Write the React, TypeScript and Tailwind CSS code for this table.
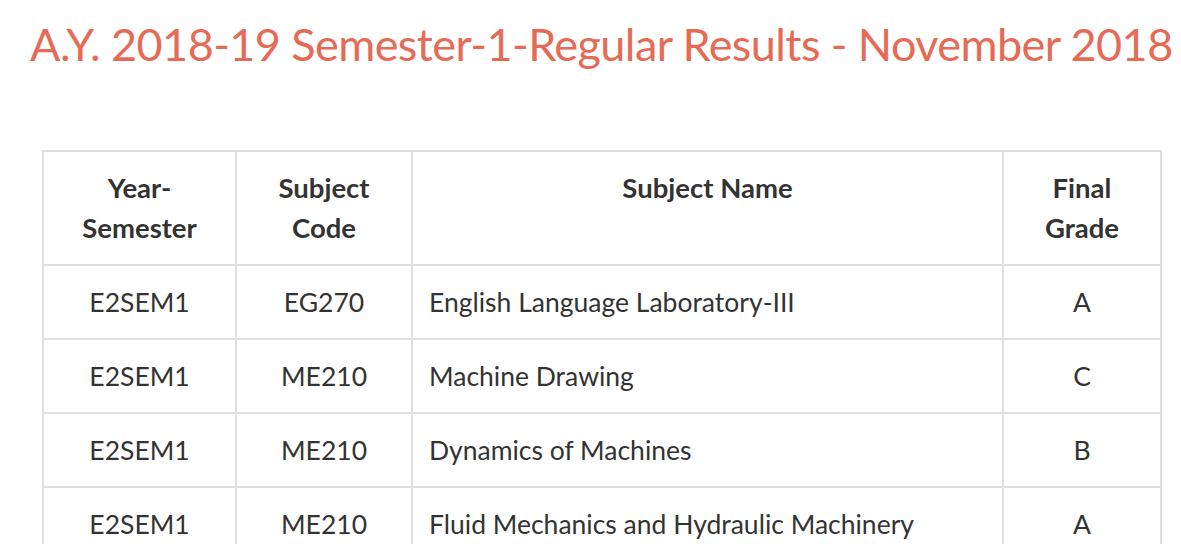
import React from "react";

const rows = [
  ["E2SEM1", "EG270", "English Language Laboratory-III", "A"],
  ["E2SEM1", "ME210", "Machine Drawing", "C"],
  ["E2SEM1", "ME210", "Dynamics of Machines", "B"],
  ["E2SEM1", "ME210", "Fluid Mechanics and Hydraulic Machinery", "A"],
];

const cell = "border-2 border-[#e0e0e0] px-4 py-4 leading-[40px]";

export default function App() {
  return (
    <div
      className="w-[1181px] h-[544px] overflow-hidden bg-white"
      style={{ fontFamily: "Lato, 'Open Sans', sans-serif" }}
    >
      <h1 className="pl-[30px] pt-[13px] text-[45px] leading-[62px] tracking-[-0.57px] text-[#e66b56] font-normal whitespace-nowrap">
        A.Y. 2018-19 Semester-1-Regular Results - November 2018
      </h1>
      <div className="pl-[42px] pt-[75px]">
        <table className="w-[1118px] border-collapse text-[#333] text-[26.5px] table-fixed">
          <colgroup>
            <col className="w-[193px]" />
            <col className="w-[176px]" />
            <col className="w-[591px]" />
            <col className="w-[158px]" />
          </colgroup>
          <thead>
            <tr className="text-[27.5px]">
              <th className={`${cell} font-bold align-top text-center`}>
                Year-
                <br />
                Semester
              </th>
              <th className={`${cell} font-bold align-top text-center`}>
                Subject
                <br />
                Code
              </th>
              <th className={`${cell} font-bold align-top text-center`}>
                Subject Name
              </th>
              <th className={`${cell} font-bold align-top text-center`}>
                Final
                <br />
                Grade
              </th>
            </tr>
          </thead>
          <tbody>
            {rows.map((r, i) => (
              <tr key={i}>
                <td className={`${cell} text-center`}>{r[0]}</td>
                <td className={`${cell} text-center`}>{r[1]}</td>
                <td className={`${cell} text-left`}>{r[2]}</td>
                <td className={`${cell} text-center`}>{r[3]}</td>
              </tr>
            ))}
          </tbody>
        </table>
      </div>
    </div>
  );
}
